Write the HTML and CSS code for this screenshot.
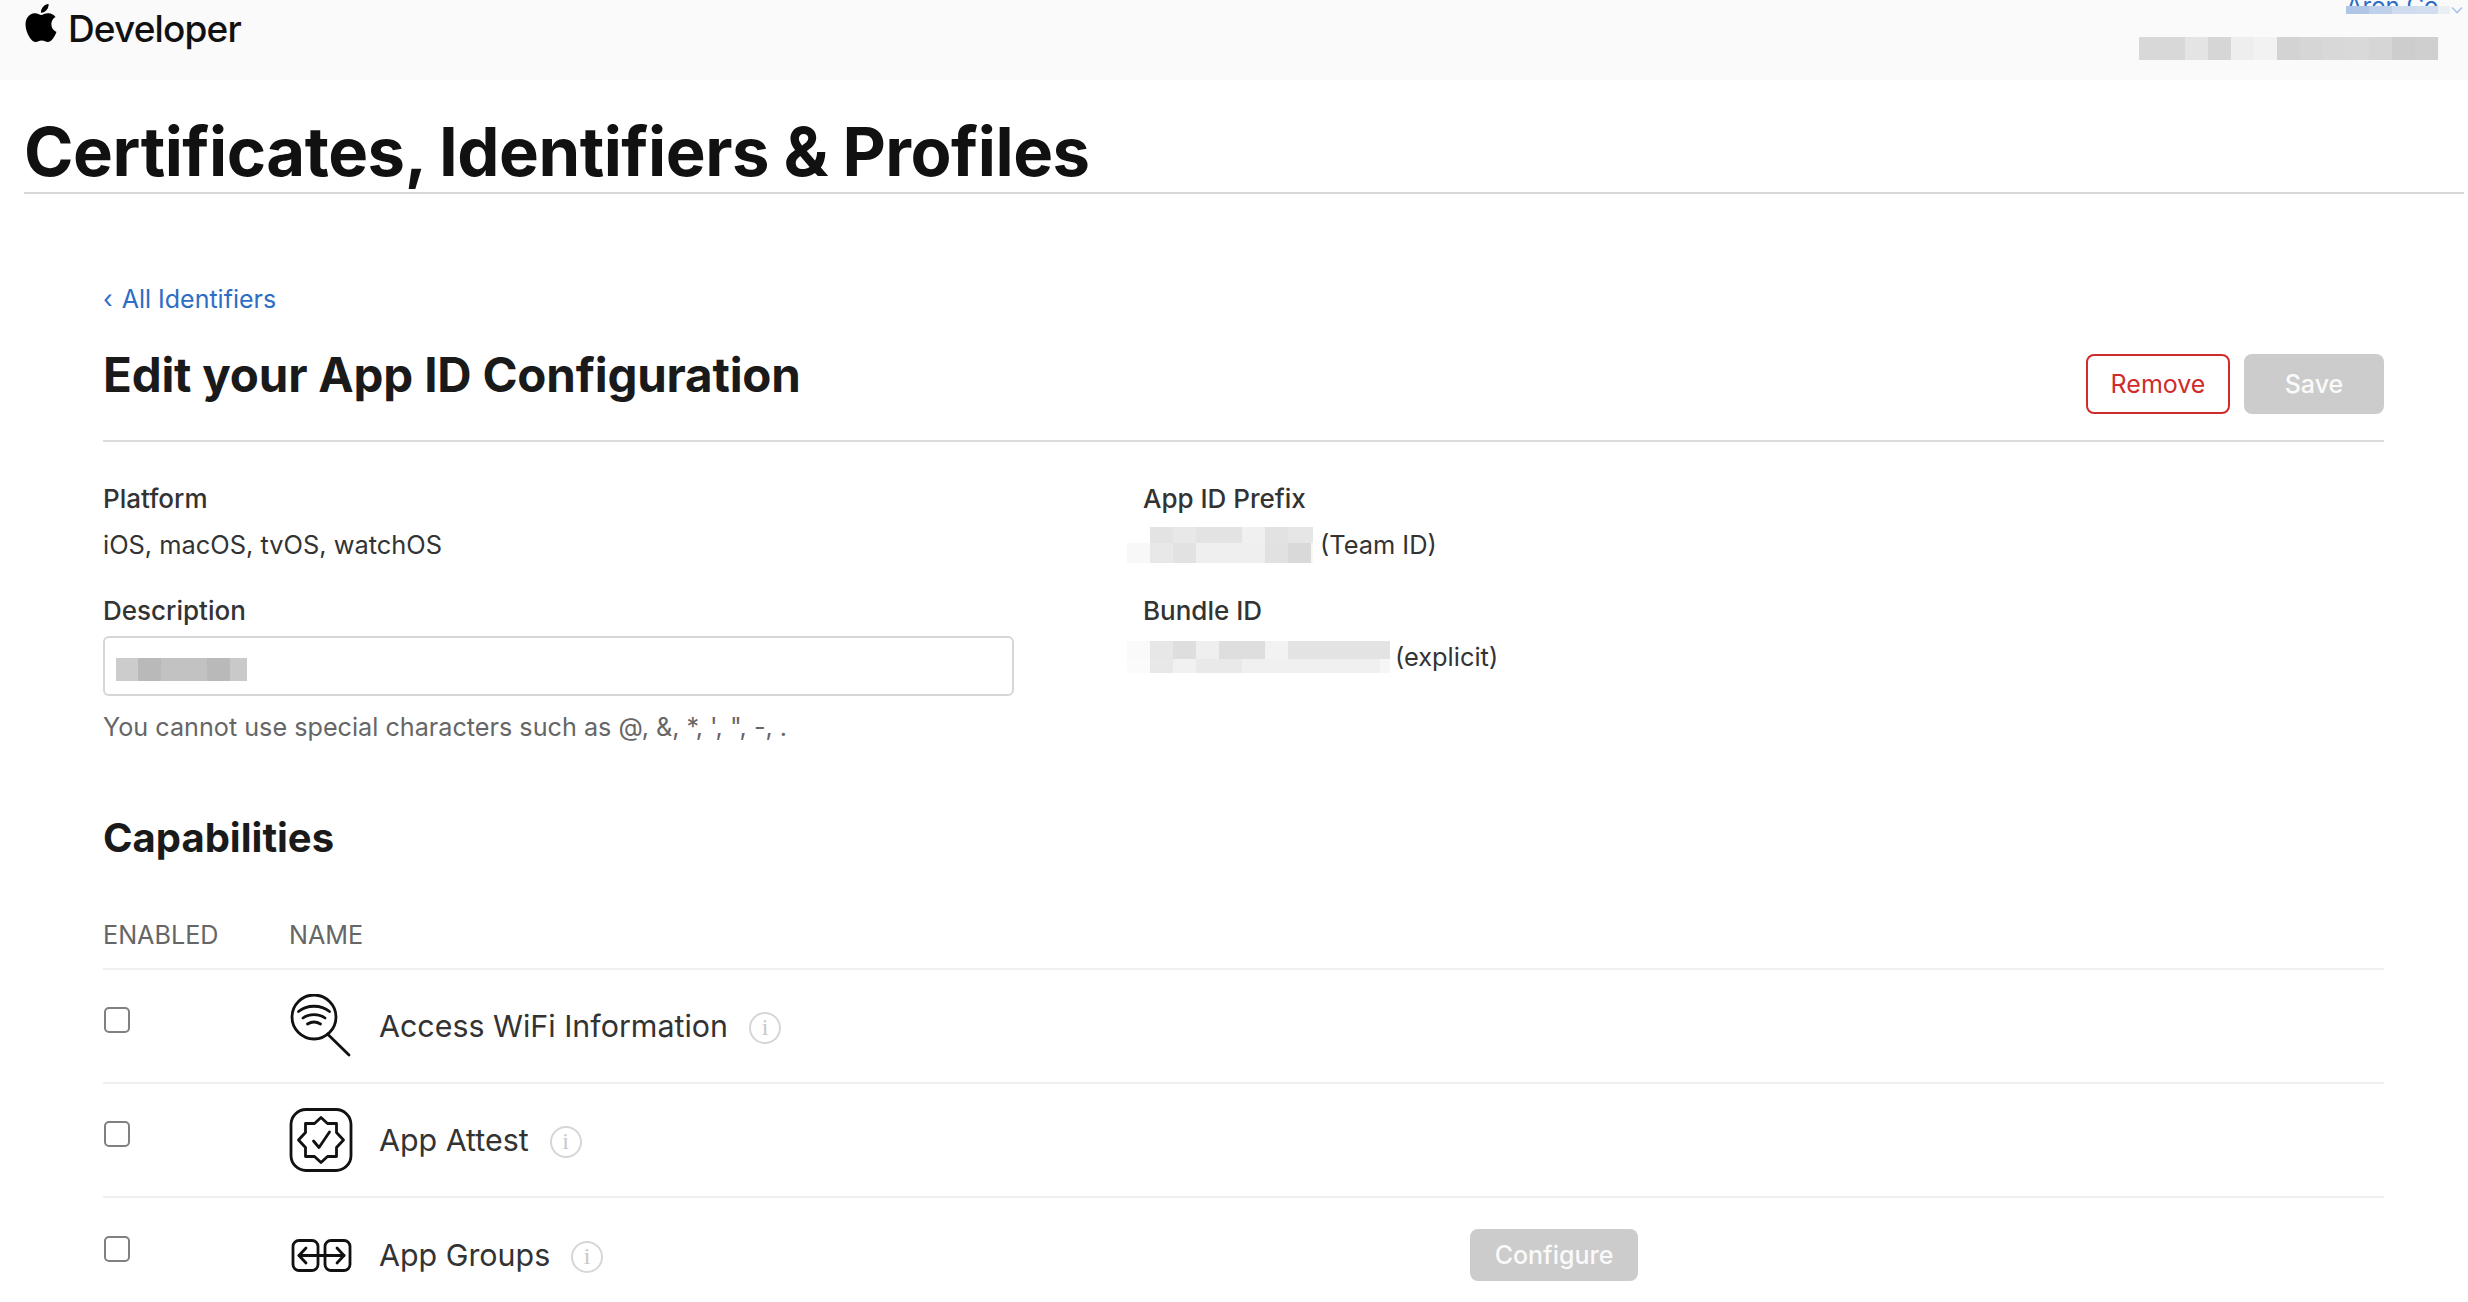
FILE: index.html
```html
<!DOCTYPE html>
<html lang="en">
<head>
<meta charset="utf-8">
<title>Certificates, Identifiers &amp; Profiles</title>
<link rel="stylesheet" href="styles.css">
</head>
<body>
<header class="topbar">
  <div class="brand">
    <svg class="apple" viewBox="0 0 24 24" aria-hidden="true"><path d="M12.152 6.896c-.948 0-2.415-1.078-3.96-1.04-2.04.027-3.91 1.183-4.961 3.014-2.117 3.675-.546 9.103 1.519 12.09 1.013 1.454 2.208 3.09 3.792 3.039 1.52-.065 2.09-.987 3.935-.987 1.831 0 2.35.987 3.96.948 1.637-.026 2.676-1.48 3.676-2.948 1.156-1.688 1.636-3.325 1.662-3.415-.039-.013-3.182-1.221-3.22-4.857-.026-3.04 2.48-4.494 2.597-4.559-1.429-2.09-3.623-2.324-4.39-2.376-2-.156-3.675 1.09-4.61 1.09zM15.53 3.83c.843-1.012 1.4-2.427 1.245-3.83-1.207.052-2.662.805-3.532 1.818-.78.896-1.454 2.338-1.273 3.714 1.338.104 2.715-.688 3.559-1.701"/></svg>
    <span class="brand-name">Developer</span>
  </div>
  <div class="account">
    <span class="account-name">Aron Co</span>
    <span class="account-blur"></span>
    <svg class="account-chevron" viewBox="0 0 12 8" aria-hidden="true"><path d="M1 1.5 6 6.5 11 1.5"/></svg>
    <span class="team-blur"></span>
  </div>
</header>

<div class="title-wrap">
  <h1 class="page-title">Certificates, Identifiers &amp; Profiles</h1>
</div>

<main class="content">
  <a class="back" href="#"><span class="back-mark">‹</span> All Identifiers</a>
  <div class="edit-head">
    <h2 class="edit-title">Edit your App ID Configuration</h2>
    <div class="actions">
      <button class="btn btn-remove" type="button">Remove</button>
      <button class="btn btn-save" type="button">Save</button>
    </div>
  </div>

  <section class="details">
    <div class="col-left">
      <div class="field">
        <div class="label">Platform</div>
        <div class="value">iOS, macOS, tvOS, watchOS</div>
      </div>
      <div class="field">
        <div class="label">Description</div>
        <div class="input"><span class="input-blur"></span></div>
        <div class="hint">You cannot use special characters such as @, &amp;, *, ', ", -, .</div>
      </div>
    </div>
    <div class="col-right">
      <div class="field">
        <div class="label">App ID Prefix</div>
        <div class="value value-blurred"><span class="prefix-blur"></span>(Team ID)</div>
      </div>
      <div class="field">
        <div class="label">Bundle ID</div>
        <div class="value value-blurred"><span class="bundle-blur"></span>(explicit)</div>
      </div>
    </div>
  </section>

  <h2 class="cap-title">Capabilities</h2>
  <div class="cap-head">
    <span class="cap-enabled">ENABLED</span>
    <span>NAME</span>
  </div>

  <div class="cap-row">
    <span class="check"></span>
    <div class="cap-main">
      <span class="cap-icon">
        <svg viewBox="0 0 64 64" aria-hidden="true"><circle cx="25" cy="23" r="22"/><path d="M38.500 40 60 61"/><path d="M9.500 17.500C18 10.500 32 10.500 40.500 17.500"/><path d="M14 24C20 19.500 30 19.500 36 24"/><path d="M18.500 30C22.500 27.500 27.500 27.500 31.500 30"/></svg>
      </span>
      <span class="cap-name">Access WiFi Information</span>
      <span class="info">i</span>
    </div>
  </div>

  <div class="cap-row">
    <span class="check"></span>
    <div class="cap-main">
      <span class="cap-icon">
        <svg viewBox="0 0 64 64" aria-hidden="true"><rect x="2" y="1.500" width="60" height="61" rx="15"/><path d="M32 9.500 38.500 15.500H47.500V24.500L54.500 32 47.500 39.500V48.500H38.500L32 54.500 25.500 48.500H16.500V39.500L9.500 32 16.500 24.500V15.500H25.500Z"/><path d="M24.500 33 30 39.500 40.500 24"/></svg>
      </span>
      <span class="cap-name">App Attest</span>
      <span class="info">i</span>
    </div>
  </div>

  <div class="cap-row cap-row-last">
    <span class="check"></span>
    <div class="cap-main">
      <span class="cap-icon">
        <svg viewBox="0 0 64 64" aria-hidden="true"><rect x="4" y="17.500" width="25" height="30" rx="6"/><rect x="36" y="17.500" width="25" height="30" rx="6"/><path d="M10 32.500H55"/><path d="M17 25 10 32.500 17 40"/><path d="M48 25 55 32.500 48 40"/></svg>
      </span>
      <span class="cap-name">App Groups</span>
      <span class="info">i</span>
    </div>
    <button class="btn-configure" type="button">Configure</button>
  </div>
</main>
</body>
</html>
```

FILE: styles.css
```css
* { box-sizing: border-box; }

html, body {
  margin: 0;
  height: 1302px;
  overflow: hidden;
  background: #fff;
}

body {
  font-family: Inter, "Liberation Sans", sans-serif;
  color: #333;
}

.topbar {
  height: 80px;
  background: #fafafa;
  display: flex;
  justify-content: space-between;
}

.brand {
  display: flex;
  align-items: flex-start;
  gap: 8px;
  padding: 4px 0 0 22px;
}

.apple {
  width: 38px;
  height: 38px;
  fill: #000;
}

.brand-name {
  font-size: 37px;
  line-height: 50px;
  font-weight: 500;
  letter-spacing: -0.85px;
  color: #111;
}

.account {
  position: relative;
  width: 340px;
}

.account-name {
  position: absolute;
  left: 218px;
  top: -8px;
  font-size: 24px;
  line-height: 28px;
  color: #2d6dc4;
}

.account-blur {
  position: absolute;
  left: 218px;
  top: 6px;
  width: 104px;
  height: 8px;
  background: linear-gradient(90deg, #b0c6e6 0 23px, #bed0ea 23px 46px, #cfdcf0 46px 69px, #d2deef 69px 92px, #eaeff6 92px);
}

.account-chevron {
  position: absolute;
  left: 323px;
  top: 6px;
  width: 12px;
  height: 8px;
  fill: none;
  stroke: #a9c3ea;
  stroke-width: 1.600;
}

.team-blur {
  position: absolute;
  left: 11px;
  top: 37px;
  width: 300px;
  height: 23px;
  background: linear-gradient(90deg, #d8d8d8 0 46px, #e4e4e4 46px 69px, #d6d6d6 69px 92px, #eeeeee 92px 115px, #f2f2f2 115px 138px, #d3d3d3 138px 161px, #d6d6d6 161px 184px, #d8d8d8 184px 207px, #d9d9d9 207px 230px, #d6d6d6 230px 253px, #cdcdcd 253px 276px, #cfcfcf 276px 299px, #f6f6f6 299px);
}

.title-wrap {
  margin-left: 24px;
  margin-right: 4px;
  height: 114px;
  border-bottom: 2px solid #d8d8d8;
}

.page-title {
  margin: 0;
  padding-top: 32px;
  font-size: 67px;
  line-height: 80px;
  font-weight: 700;
  letter-spacing: -0.48px;
  word-spacing: -1px;
  color: #111;
  white-space: nowrap;
}

.content {
  padding: 89px 84px 0 103px;
}

.back {
  display: block;
  font-size: 25px;
  line-height: 32px;
  color: #2d6dc4;
  text-decoration: none;
}

.back-mark {
  margin-right: 2px;
}

.edit-head {
  display: flex;
  justify-content: space-between;
  align-items: flex-start;
  height: 95px;
  margin-top: 32px;
  border-bottom: 2px solid #dcdcdc;
}

.edit-title {
  margin: 0;
  font-size: 47.500px;
  line-height: 56px;
  font-weight: 700;
  color: #1a1a1a;
  letter-spacing: -0.2px;
}

.actions {
  display: flex;
  gap: 14px;
  margin-top: 7px;
}

.btn {
  height: 60px;
  border-radius: 8px;
  font-family: inherit;
  font-size: 25px;
  padding: 0;
}

.btn-remove {
  width: 144px;
  background: #fff;
  border: 2px solid #d02c2c;
  color: #d02c2c;
}

.btn-save {
  width: 140px;
  background: #cccccc;
  border: 0;
  color: #fafafa;
  font-weight: 500;
}

.details {
  display: flex;
  padding-top: 39px;
}

.col-left {
  width: 1040px;
}

.col-right {
  flex: 1;
}

.field + .field {
  margin-top: 30px;
}

.label {
  font-size: 26px;
  line-height: 36px;
  font-weight: 500;
  color: #333;
}

.value {
  margin-top: 10px;
  font-size: 25.400px;
  line-height: 36px;
  color: #333;
}

.value-blurred {
  display: flex;
  align-items: center;
}

.prefix-blur,
.bundle-blur {
  display: block;
  margin-left: -16px;
}

.prefix-blur {
  width: 186px;
  height: 36px;
  margin-right: 7px;
  background:
    linear-gradient(90deg, #e3e3e3 23px, #e8e8e8 23px 46px, #e3e3e3 46px 92px, #f0f0f0 92px 115px, #e2e2e2 115px 138px, #e6e6e6 138px 163px, #f6f6f6 163px) 23px 0 / 163px 16px no-repeat,
    linear-gradient(90deg, #f8f8f8 23px, #e8e8e8 23px 46px, #e2e2e2 46px 69px, #efefef 69px 138px, #e1e1e1 138px 161px, #d9d9d9 161px 184px, #f6f6f6 184px) 0 16px / 186px 20px no-repeat;
}

.bundle-blur {
  width: 263px;
  height: 32px;
  margin-right: 5px;
  background:
    linear-gradient(90deg, #fafafa 23px, #e7e7e7 23px 46px, #dedede 46px 69px, #efefef 69px 92px, #dedede 92px 138px, #f2f2f2 138px 161px, #e3e3e3 161px 263px) 0 0 / 263px 18px no-repeat,
    linear-gradient(90deg, #fbfbfb 23px, #e8e8e8 23px 46px, #f1f1f1 46px 69px, #e9e9e9 69px 115px, #f0f0f0 115px 253px, #f6f6f6 253px) 0 18px / 263px 14px no-repeat;
}

.input {
  width: 911px;
  height: 60px;
  margin-top: 7px;
  padding: 20px 0 0 11px;
  border: 2px solid #d6d6d6;
  border-radius: 6px;
}

.input-blur {
  display: block;
  width: 131px;
  height: 23px;
  background: linear-gradient(90deg, #cccccc 0 22px, #b9b9b9 22px 45px, #c2c2c2 45px 91px, #b9b9b9 91px 114px, #c9c9c9 114px);
}

.hint {
  margin-top: 13px;
  font-size: 25.200px;
  line-height: 36px;
  color: #666;
}

.cap-title {
  margin: 68px 0 0;
  font-size: 40px;
  line-height: 50px;
  font-weight: 700;
  color: #1a1a1a;
}

.cap-head {
  display: flex;
  height: 53px;
  margin-top: 54px;
  border-bottom: 2px solid #f0f0f0;
  font-size: 25.200px;
  line-height: 36px;
  color: #666;
}

.cap-enabled {
  width: 186px;
}

.cap-row {
  display: flex;
  align-items: center;
  height: 114px;
  border-bottom: 2px solid #f0f0f0;
}

.cap-row-last {
  border-bottom: 0;
}

.check {
  flex: none;
  width: 26px;
  height: 26px;
  margin: -12px 159px 0 1px;
  border: 2px solid #808080;
  border-radius: 5px;
}

.cap-main {
  flex: none;
  display: flex;
  align-items: center;
  width: 1181px;
}

.cap-icon {
  flex: none;
  width: 64px;
  height: 64px;
  margin-right: 26px;
}

.cap-icon svg {
  display: block;
  width: 64px;
  height: 64px;
  fill: none;
  stroke: #111;
  stroke-width: 2.800;
  stroke-linecap: round;
  stroke-linejoin: round;
}

.cap-name {
  font-size: 30.400px;
  line-height: 40px;
  color: #333;
}

.info {
  flex: none;
  width: 32px;
  height: 32px;
  margin-left: 21px;
  margin-top: 4px;
  border: 2px solid #d6d6d6;
  border-radius: 50%;
  font-family: "Liberation Serif", serif;
  font-size: 24px;
  line-height: 27px;
  text-align: center;
  color: #c8c8c8;
}

.btn-configure {
  flex: none;
  width: 168px;
  height: 52px;
  border: 0;
  border-radius: 8px;
  background: #cccccc;
  color: #fafafa;
  font-family: inherit;
  font-size: 25px;
  font-weight: 500;
  padding: 0;
}
```
